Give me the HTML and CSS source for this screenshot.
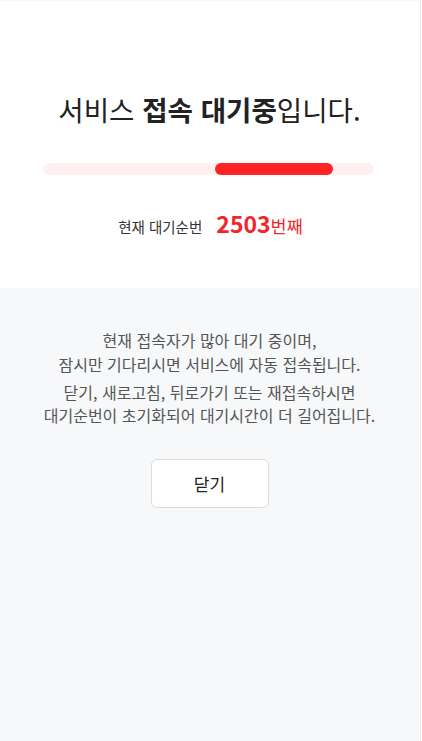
FILE: index.html
```html
<!DOCTYPE html>
<html lang="ko">
<head>
<meta charset="utf-8">
<title>서비스 접속 대기중</title>
<link rel="stylesheet" href="styles.css">
</head>
<body>
<div class="frame">
  <div class="page">
    <section class="top">
      <h1 class="title">서비스 <strong>접속 대기중</strong>입니다.</h1>
      <div class="track"><div class="fill"></div></div>
      <p class="queue"><span class="queue-label">현재 대기순번</span><span class="queue-num">2503</span><span class="queue-unit">번째</span></p>
    </section>
    <section class="bottom">
      <p class="msg">현재 접속자가 많아 대기 중이며,<br>잠시만 기다리시면 서비스에 자동 접속됩니다.</p>
      <p class="msg">닫기, 새로고침, 뒤로가기 또는 재접속하시면<br>대기순번이 초기화되어 대기시간이 더 길어집니다.</p>
      <button class="close-btn" type="button">닫기</button>
    </section>
  </div>
</div>
</body>
</html>
```
FILE: styles.css
```css
html, body {
  margin: 0;
  padding: 0;
  background: #ffffff;
  height: 100%;
}
body {
  font-family: "Noto Sans CJK KR", "Noto Sans", sans-serif;
  color: #222;
}
.frame {
  width: 421px;
  min-height: 741px;
  border-right: 1px solid #ececec;
  border-top: 1px solid #f6f6f6;
  box-sizing: border-box;
  display: flex;
}
.page {
  width: 419px;
  display: flex;
  flex-direction: column;
  min-height: 740px;
}
.top {
  height: 287px;
  display: flex;
  flex-direction: column;
  align-items: center;
  padding-top: 88px;
  box-sizing: border-box;
  background: #fff;
}
.title {
  margin: 0;
  font-size: 27.6px;
  font-weight: 400;
  line-height: 40px;
  color: #222;
  letter-spacing: 0;
}
.title strong {
  font-weight: 700;
}
.track {
  margin-top: 34px;
  width: 331px;
  height: 12px;
  border-radius: 6px;
  background: #fff0f0;
  position: relative;
  margin-left: -2px;
}
.fill {
  position: absolute;
  left: 172px;
  top: 0;
  width: 118px;
  height: 12px;
  border-radius: 6px;
  background: #ff2326;
}
.queue {
  margin: 33px 0 0 0;
  display: flex;
  align-items: baseline;
  line-height: 30px;
  margin-left: 2px;
}
.queue-label {
  font-size: 14.5px;
  color: #333;
  margin-right: 14px;
}
.queue-num {
  font-size: 23px;
  font-weight: 700;
  color: #f2252a;
}
.queue-unit {
  font-size: 17.5px;
  color: #f2252a;
}
.bottom {
  flex: 1;
  background: #f7f8fa;
  display: flex;
  flex-direction: column;
  align-items: center;
  padding-top: 41px;
}
.msg {
  margin: 0 0 4.5px 0;
  font-size: 16px;
  line-height: 23.5px;
  color: #555;
  text-align: center;
}
.close-btn {
  margin-top: 27px;
  width: 118px;
  height: 49px;
  border: 1px solid #dcdcdc;
  border-radius: 6px;
  background: #fff;
  font-family: "Noto Sans CJK KR", "Noto Sans", sans-serif;
  font-size: 17px;
  color: #222;
  padding: 0;
}
```
